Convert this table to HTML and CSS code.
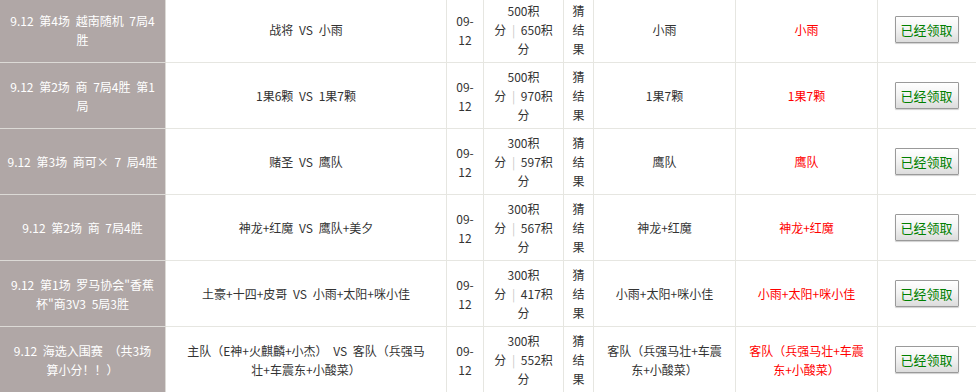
FILE: index.html
```html
<!DOCTYPE html>
<html lang="zh-CN">
<head>
<meta charset="utf-8">
<title>竞猜记录</title>
<link rel="stylesheet" href="styles.css">
</head>
<body>
<div class="frame">
<table class="list">
  <colgroup>
    <col class="c-title"><col class="c-match"><col class="c-date"><col class="c-points"><col class="c-guess"><col class="c-pick"><col class="c-result"><col class="c-action">
  </colgroup>
  <tbody>
    <tr>
      <td class="title">9.12 第4场 越南随机 7局4<br>胜</td>
      <td>战将 VS 小雨</td>
      <td>09-<br>12</td>
      <td>500积<br>分 <span class="sep">|</span> 650积<br>分</td>
      <td>猜<br>结<br>果</td>
      <td>小雨</td>
      <td class="win">小雨</td>
      <td><button class="btn">已经领取</button></td>
    </tr>
    <tr>
      <td class="title">9.12 第2场 商 7局4胜 第1<br>局</td>
      <td>1果6颗 VS 1果7颗</td>
      <td>09-<br>12</td>
      <td>500积<br>分 <span class="sep">|</span> 970积<br>分</td>
      <td>猜<br>结<br>果</td>
      <td>1果7颗</td>
      <td class="win">1果7颗</td>
      <td><button class="btn">已经领取</button></td>
    </tr>
    <tr>
      <td class="title">9.12 第3场 商可× 7 局4胜</td>
      <td>赌圣 VS 鹰队</td>
      <td>09-<br>12</td>
      <td>300积<br>分 <span class="sep">|</span> 597积<br>分</td>
      <td>猜<br>结<br>果</td>
      <td>鹰队</td>
      <td class="win">鹰队</td>
      <td><button class="btn">已经领取</button></td>
    </tr>
    <tr>
      <td class="title">9.12 第2场 商 7局4胜</td>
      <td>神龙+红魔 VS 鹰队+美夕</td>
      <td>09-<br>12</td>
      <td>300积<br>分 <span class="sep">|</span> 567积<br>分</td>
      <td>猜<br>结<br>果</td>
      <td>神龙+红魔</td>
      <td class="win">神龙+红魔</td>
      <td><button class="btn">已经领取</button></td>
    </tr>
    <tr>
      <td class="title">9.12 第1场 罗马协会"香蕉<br>杯"商3V3 5局3胜</td>
      <td>土豪+十四+皮哥 VS 小雨+太阳+咪小佳</td>
      <td>09-<br>12</td>
      <td>300积<br>分 <span class="sep">|</span> 417积<br>分</td>
      <td>猜<br>结<br>果</td>
      <td>小雨+太阳+咪小佳</td>
      <td class="win">小雨+太阳+咪小佳</td>
      <td><button class="btn">已经领取</button></td>
    </tr>
    <tr>
      <td class="title">9.12 海选入围赛 （共3场<br>算小分！！）</td>
      <td>主队（E神+火麒麟+小杰） VS 客队（兵强马<br>壮+车震东+小酸菜）</td>
      <td>09-<br>12</td>
      <td>300积<br>分 <span class="sep">|</span> 552积<br>分</td>
      <td>猜<br>结<br>果</td>
      <td>客队（兵强马壮+车震<br>东+小酸菜）</td>
      <td class="win">客队（兵强马壮+车震<br>东+小酸菜）</td>
      <td><button class="btn">已经领取</button></td>
    </tr>
  </tbody>
</table>
</div>
</body>
</html>
```

FILE: styles.css
```css
html, body {
  margin: 0;
  padding: 0;
  background: #fff;
}

.frame {
  width: 976px;
  height: 392px;
  overflow: hidden;
}

.list {
  border-collapse: collapse;
  table-layout: fixed;
  width: 978px;
  margin: -4px 0 0 -1px;
  font-family: "Noto Sans CJK SC", "Liberation Sans", sans-serif;
  font-size: 12px;
  line-height: 19px;
  word-spacing: 3px;
  color: #333;
}

.c-title { width: 166px; }
.c-match { width: 281px; }
.c-date { width: 37px; }
.c-points { width: 80px; }
.c-guess { width: 30px; }
.c-pick { width: 142px; }
.c-result { width: 142px; }
.c-action { width: 100px; }

.list td {
  border: 1px solid #e6e6e1;
  height: 57px;
  padding: 4px 0;
  text-align: center;
  vertical-align: middle;
}

.list td.title {
  background: #b0a7a6;
  color: #fff;
  border-color: #dcdad6;
}

.list td.win {
  color: #f00;
}

.sep {
  color: #c8c8c8;
}

.btn {
  width: 64px;
  height: 27px;
  padding: 0;
  margin-left: -2px;
  border: 1px solid #9a9a9a;
  border-radius: 1px;
  background: linear-gradient(#ffffff, #f2f2f2 50%, #dcdcdc);
  box-shadow: 0 1px 1px #d0d0d0;
  color: #008000;
  font-family: "Noto Sans CJK SC", "Liberation Sans", sans-serif;
  font-size: 13px;
  line-height: 25px;
  word-spacing: 0;
}
```
